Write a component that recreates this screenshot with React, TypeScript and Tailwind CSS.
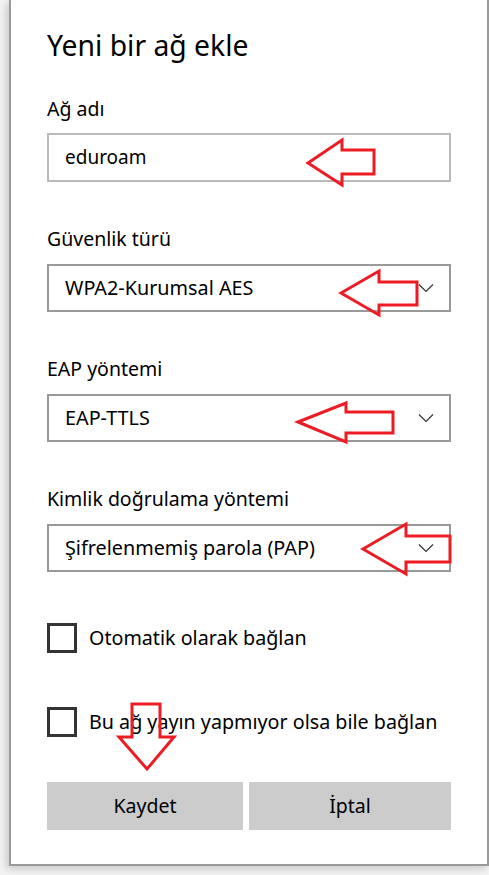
const font = "font-['Noto_Sans','Open_Sans',sans-serif]";

function Chevron() {
  return (
    <svg width="16" height="10" viewBox="0 0 16 10" className="shrink-0">
      <polyline points="1,1.5 8,8.5 15,1.5" fill="none" stroke="#333" strokeWidth="1.2" />
    </svg>
  );
}

function Label({ children }: { children: string }) {
  return <div className="mt-[44px] h-[26px] text-[19.5px] leading-[26px] text-black">{children}</div>;
}

function Select({ value }: { value: string }) {
  return (
    <div className="mt-[12px] h-[48px] w-[404px] border-2 border-[#999999] flex items-center justify-between pl-[16px] pr-[15px]">
      <span className="text-[19.8px] text-black">{value}</span>
      <Chevron />
    </div>
  );
}

function Check({ label, className }: { label: string; className: string }) {
  return (
    <div className={`${className} flex items-center gap-[12px] h-[30px]`}>
      <div className="w-[30px] h-[30px] border-[3px] border-[#333333] bg-white shrink-0" />
      <span className="text-[19.7px] text-black whitespace-nowrap">{label}</span>
    </div>
  );
}

function Arrows() {
  const red = "#ed1c24";
  return (
    <svg className="absolute inset-0 pointer-events-none" width="489" height="875" viewBox="0 0 489 875">
      <g fill="none" stroke={red} strokeWidth="3" strokeLinejoin="miter">
        <polygon points="308,163 342,140 342,150 374,150 374,174 342,174 342,185" />
        <polygon points="341,293 379,271 379,282 417,282 417,305 379,305 379,315" />
        <polygon points="298,422 346,403 346,412 393,412 393,433 346,433 346,442" />
        <polygon points="363,549 406,524 406,536 450,536 450,562 406,562 406,574" />
        <polygon points="132,704 160,704 160,737 174,737 147,769 119,737 132,737" />
      </g>
    </svg>
  );
}

export default function App() {
  return (
    <div className={`${font} relative w-[489px] h-[875px] bg-[#f4f4f4] overflow-hidden`}>
      <div className="ml-[9px] w-[480px] h-[866px] bg-white border-x-2 border-b-2 border-[#9a9a9a] shadow-[-3px_3px_8px_rgba(0,0,0,0.18)] pl-[36px]">
        <h1 className="pt-[26px] h-[64px] text-[28.3px] leading-[38px] font-normal text-black">Yeni bir ağ ekle</h1>

        <div className="mt-[32px] h-[26px] text-[19.5px] leading-[26px] text-black">Ağ adı</div>
        <div className="mt-[11px] h-[49px] w-[404px] border-2 border-[#bababa] flex items-center pl-[16px]">
          <span className="text-[19px] text-black">eduroam</span>
        </div>

        <Label>Güvenlik türü</Label>
        <Select value="WPA2-Kurumsal AES" />

        <Label>EAP yöntemi</Label>
        <Select value="EAP-TTLS" />

        <Label>Kimlik doğrulama yöntemi</Label>
        <Select value="Şifrelenmemiş parola (PAP)" />

        <Check className="mt-[51px]" label="Otomatik olarak bağlan" />
        <Check className="mt-[54px]" label="Bu ağ yayın yapmıyor olsa bile bağlan" />

        <div className="mt-[45px] flex gap-[6px] w-[404px]">
          <button className="w-[196px] h-[48px] bg-[#cccccc] text-[19.5px] text-black">Kaydet</button>
          <button className="flex-1 h-[48px] bg-[#cccccc] text-[19.5px] text-black">İptal</button>
        </div>
      </div>
      <Arrows />
    </div>
  );
}
